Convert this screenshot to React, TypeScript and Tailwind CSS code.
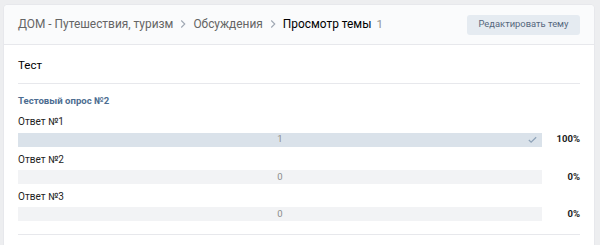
import React from "react";

const answers = [
  { label: "Ответ №1", count: 1, pct: 100, mine: true },
  { label: "Ответ №2", count: 0, pct: 0, mine: false },
  { label: "Ответ №3", count: 0, pct: 0, mine: false },
];

export default function App() {
  return (
    <div
      className="w-[600px] h-[245px] bg-[#edeef0] pt-[5px] pl-[4px] pr-[6px] overflow-hidden"
      style={{ fontFamily: "Roboto, 'Open Sans', 'Liberation Sans', sans-serif" }}
    >
      <div className="bg-white rounded-t-[4px] shadow-[0_1px_0_0_#dce1e6,0_0_0_1px_#e7e8ec] h-[260px]">
        <div className="h-[40px] bg-[#fafbfc] border-b border-[#e7e8ec] flex items-center pl-[14px] pr-[14px] rounded-t-[4px]">
          <div className="flex items-center text-[11.9px] text-[#656565]">
            <span>ДОМ - Путешествия, туризм</span>
            <svg width="14" height="14" viewBox="0 0 16 16" className="mx-[3px]">
              <path d="M6 4l4 4-4 4" fill="none" stroke="#a0a8b3" strokeWidth="1.3" />
            </svg>
            <span>Обсуждения</span>
            <svg width="14" height="14" viewBox="0 0 16 16" className="mx-[3px]">
              <path d="M6 4l4 4-4 4" fill="none" stroke="#a0a8b3" strokeWidth="1.3" />
            </svg>
            <span className="text-[#000]">Просмотр темы</span>
            <span className="ml-[5px] text-[#939393] text-[11.5px]">1</span>
          </div>
          <div className="ml-auto h-[20px] w-[113px] bg-[#e5ebf1] rounded-[3px] text-[9.4px] text-[#55677d] flex items-center justify-center">
            Редактировать тему
          </div>
        </div>
        <div className="px-[14px]">
          <div className="h-[39px] flex items-center text-[11.5px] text-[#000] border-b border-[#e7e8ec] pt-[3px]">
            Тест
          </div>
          <div className="pt-[10px] text-[9.6px] font-bold text-[#4d6d91]">Тестовый опрос №2</div>
          <div className="mt-[6px] flex flex-col gap-[5px]">
            {answers.map((a) => (
              <div key={a.label}>
                <div className="text-[10px] text-[#222] leading-[15px]">{a.label}</div>
                <div className="flex items-center mt-[3px]">
                  <div className="relative h-[14px] w-[524px] bg-[#f2f3f5] flex items-center justify-center">
                    {a.pct > 0 && (
                      <div className="absolute left-0 top-0 h-full bg-[#dae2ea]" style={{ width: `${a.pct}%` }} />
                    )}
                    <span className="relative text-[9.5px] text-[#8c8c8c]">{a.count}</span>
                    {a.mine && (
                      <svg width="11" height="11" viewBox="0 0 12 12" className="absolute right-[4px] top-[1.5px]">
                        <path d="M2 6.5l2.5 2.5L10 3.5" fill="none" stroke="#8fa3b8" strokeWidth="1.3" />
                      </svg>
                    )}
                  </div>
                  <div className="flex-1 text-right text-[9.5px] font-bold text-[#222]">{a.pct}%</div>
                </div>
              </div>
            ))}
          </div>
          <div className="mt-[13px] border-b border-[#e7e8ec]" />
        </div>
      </div>
    </div>
  );
}
